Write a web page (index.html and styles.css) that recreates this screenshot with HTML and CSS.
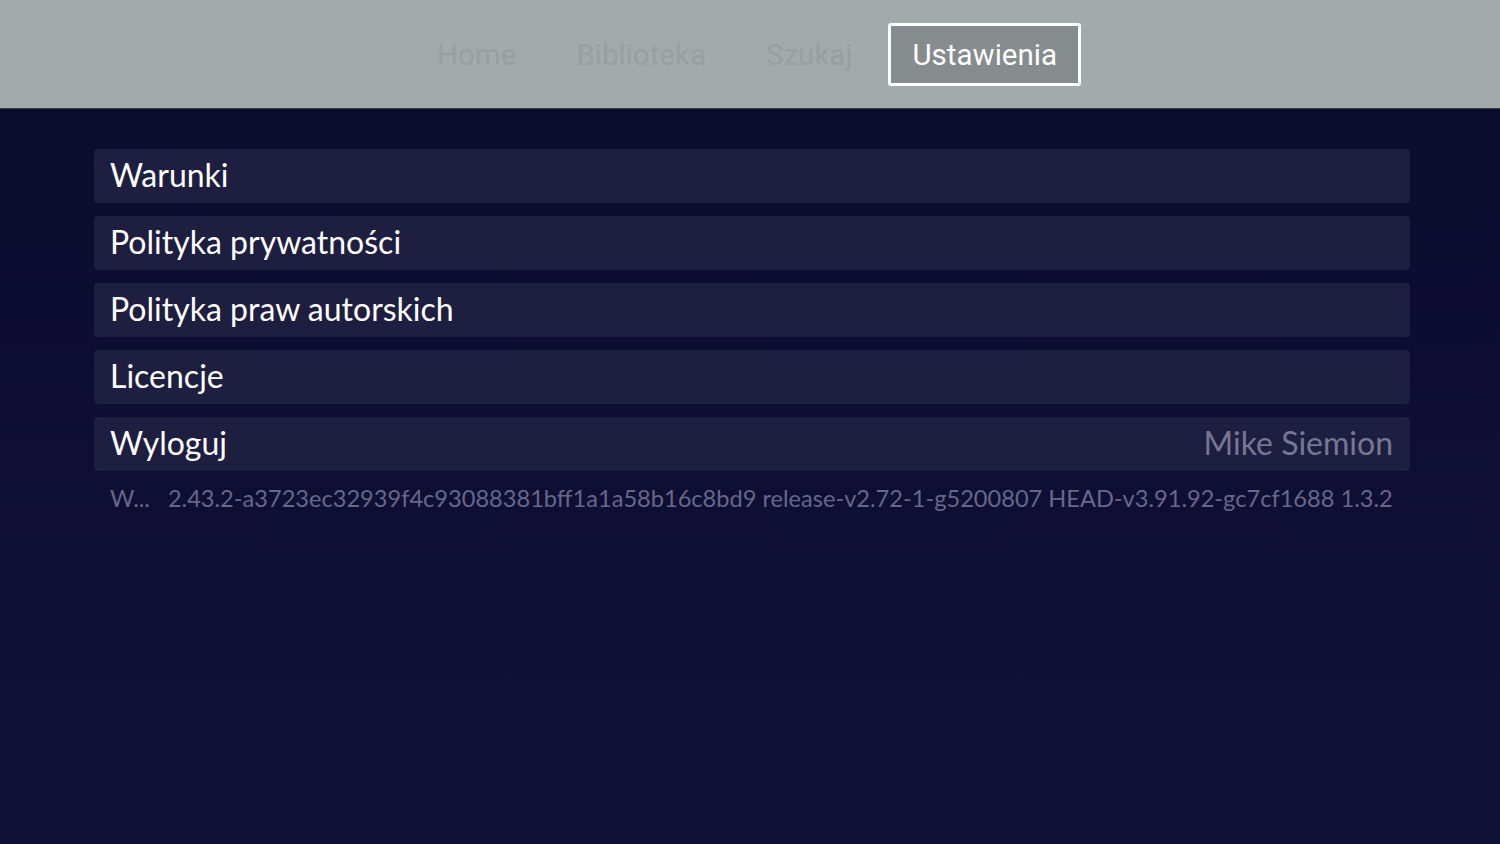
FILE: index.html
```html
<!doctype html>
<html lang="pl">
  <head>
    <meta charset="utf-8">
    <link rel="stylesheet" href="styles.css">
  </head>
  <body>
    <div class="topbar">
      <span class="tab">Home</span>
      <span class="tab">Biblioteka</span>
      <span class="tab">Szukaj</span>
      <span class="tab tab_active">Ustawienia</span>
    </div>
    <div class="settings">
      <div class="row">Warunki</div>
      <div class="row">Polityka prywatności</div>
      <div class="row">Polityka praw autorskich</div>
      <div class="row">Licencje</div>
      <div class="row">
        <span>Wyloguj</span>
        <span class="row_value">Mike Siemion</span>
      </div>
      <div class="version">
        <span>W...</span>
        <span>2.43.2-a3723ec32939f4c93088381bff1a1a58b16c8bd9 release-v2.72-1-g5200807 HEAD-v3.91.92-gc7cf1688 1.3.2</span>
      </div>
    </div>
  </body>
</html>
```
FILE: styles.css
```css
body {
  margin: 0;
  height: 844px;
  overflow: hidden;
  background: linear-gradient(#0b0b2e, #121136);
  font-family: "Lato", "Noto Sans", sans-serif;
}

.topbar {
  height: 108px;
  background-color: #a3aaac;
  border-bottom: 1px solid #3a3d48;
  display: flex;
  justify-content: center;
  align-items: center;
  gap: 12px;
  padding-right: 6px;
  font-family: "Roboto", "Liberation Sans", sans-serif;
}

.tab {
  font-size: 29.5px;
  color: #989ea1;
  padding: 2px 21px 0;
  height: 55px;
  line-height: 55px;
  border: 3px solid transparent;
  border-radius: 3px;
}

.tab_active {
  background-color: #868b8d;
  border-color: #ffffff;
  color: #ffffff;
}

.settings {
  padding: 40px 90px 0 94px;
  display: flex;
  flex-direction: column;
  gap: 13px;
}

.row {
  height: 54px;
  background-color: #1e1e40;
  border-radius: 4px;
  padding: 0 17px 3px 16px;
  box-sizing: border-box;
  display: flex;
  justify-content: space-between;
  align-items: center;
  color: #ffffff;
  font-size: 32px;
}

.row_value {
  color: #767792;
}

.version {
  display: flex;
  gap: 18px;
  padding: 0 17px 0 16px;
  margin-top: 0;
  color: #66678a;
  font-size: 23.6px;
  white-space: nowrap;
}
```
